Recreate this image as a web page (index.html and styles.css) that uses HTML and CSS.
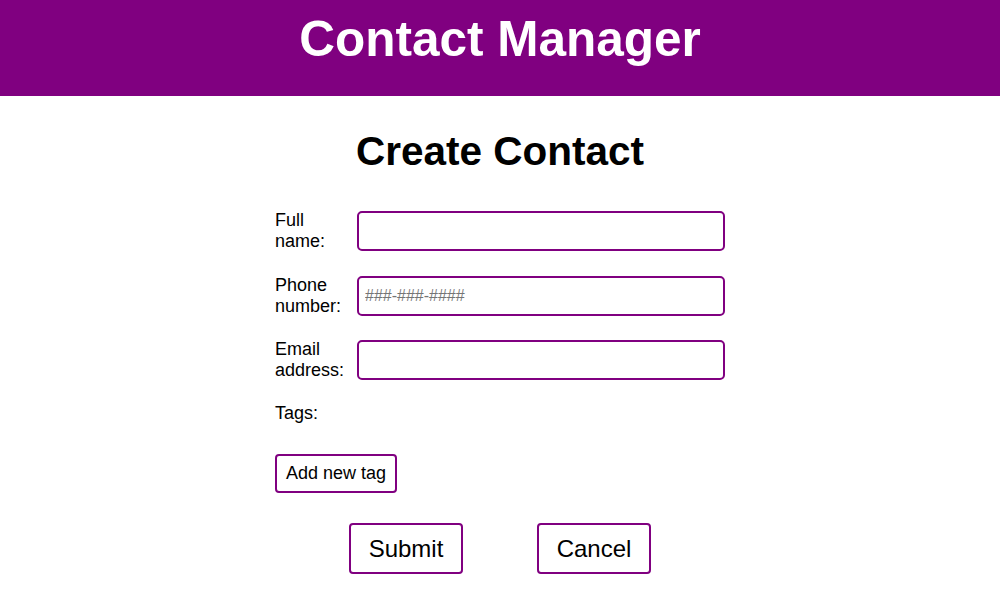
FILE: index.html
```html
<!DOCTYPE html>
<html lang="en">
<head>
<meta charset="utf-8">
<title>Contact Manager</title>
<link rel="stylesheet" href="styles.css">
</head>
<body>
<header class="site-header">
  <h1 class="site-title">Contact Manager</h1>
</header>
<main class="page">
  <h2 class="page-title">Create Contact</h2>
  <form class="contact-form">
    <div class="field">
      <label class="field-label" for="name">Full name:</label>
      <input class="field-input" id="name" type="text">
    </div>
    <div class="field">
      <label class="field-label" for="phone">Phone number:</label>
      <input class="field-input" id="phone" type="tel" placeholder="###-###-####">
    </div>
    <div class="field">
      <label class="field-label" for="email">Email address:</label>
      <input class="field-input" id="email" type="email">
    </div>
    <div class="tags">
      <span class="field-label">Tags:</span>
    </div>
    <button type="button" class="btn btn-small">Add new tag</button>
    <div class="actions">
      <button type="submit" class="btn btn-large">Submit</button>
      <button type="button" class="btn btn-large">Cancel</button>
    </div>
  </form>
</main>
</body>
</html>
```

FILE: styles.css
```css
* { box-sizing: border-box; }

body {
  margin: 0;
  font-family: "Liberation Sans", Arial, sans-serif;
  color: #000;
  background: #fff;
}

.site-header {
  background: #800080;
  height: 96px;
  padding-top: 10px;
}

.site-title {
  margin: 0;
  color: #fff;
  font-size: 49.5px;
  font-weight: bold;
  text-align: center;
  line-height: 57px;
}

.page-title {
  margin: 32px 0 0;
  font-size: 40.5px;
  font-weight: bold;
  text-align: center;
  line-height: 46px;
}

.contact-form {
  width: 450px;
  margin: 37px auto 0;
  display: flex;
  flex-direction: column;
}

.field {
  display: flex;
  align-items: center;
  gap: 8px;
  height: 40px;
  margin-bottom: 24.5px;
}

.field-label {
  width: 74px;
  flex: none;
  font-size: 18px;
  line-height: 20.7px;
}

.field-input {
  flex: 1;
  height: 40px;
  border: 2px solid #800080;
  border-radius: 5px;
  padding: 0 6px;
  font-family: "Liberation Sans", Arial, sans-serif;
  font-size: 16px;
  outline: none;
}

.field-input::placeholder {
  color: #757575;
}

.tags {
  margin-top: -1.5px;
  height: 21px;
}

.btn {
  font-family: "Liberation Sans", Arial, sans-serif;
  background: #fff;
  color: #000;
  border: 2px solid #800080;
  border-radius: 4px;
  cursor: pointer;
}

.btn-small {
  align-self: flex-start;
  margin-top: 29.5px;
  height: 39px;
  padding: 0 9px;
  font-size: 18px;
}

.actions {
  display: flex;
  justify-content: space-evenly;
  margin-top: 30.5px;
}

.btn-large {
  height: 51px;
  width: 114px;
  padding: 0;
  font-size: 24px;
}
```
